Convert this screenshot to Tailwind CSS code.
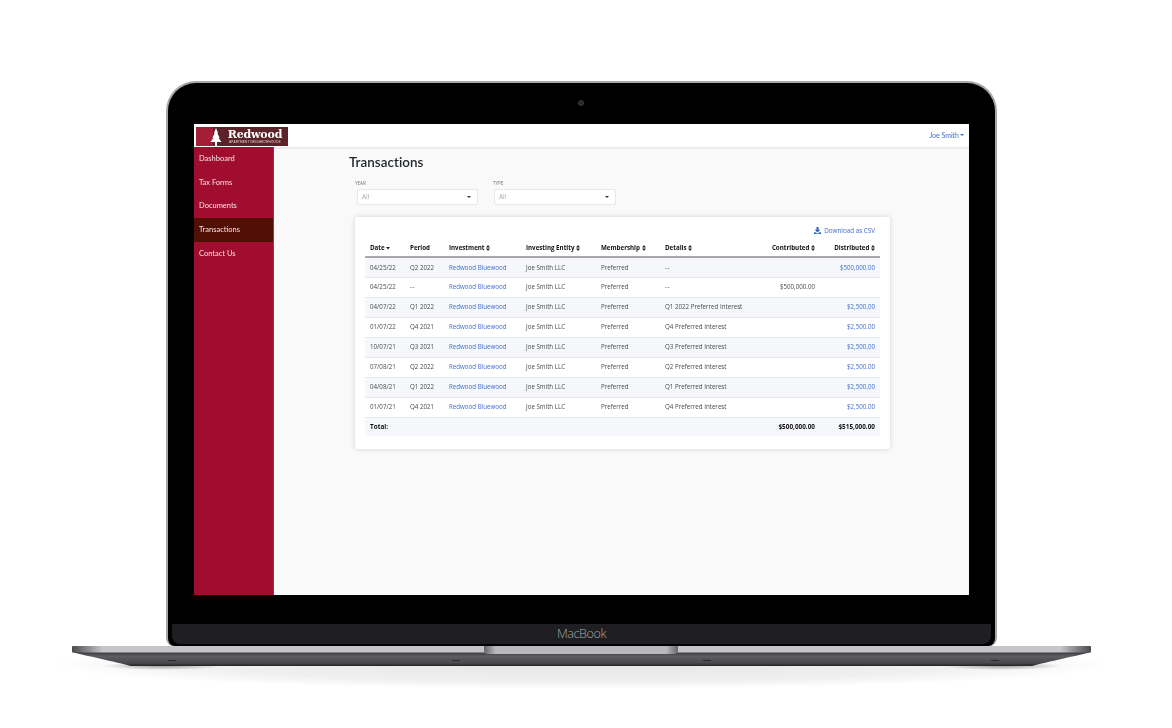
<!DOCTYPE html>
<html lang="en">
<head>
  <meta charset="UTF-8">
  <title>Transactions</title>
  <script src="https://cdn.jsdelivr.net/npm/@tailwindcss/browser@4"></script>
</head>
<body class="bg-white overflow-hidden font-['Open_Sans',sans-serif]">
  <div class="w-[1172px] h-[728px] pt-[81px] flex flex-col items-start">

    <!-- lid -->
    <div class="relative ml-[166px] w-[831px] h-[565px] rounded-t-[30px] rounded-b-[8px] bg-black border-x-2 border-t-2 border-[#a8a8aa] pt-[41px] pl-[26px]">
      <div class="absolute left-[410px] top-[17px] w-[6px] h-[6px] rounded-full bg-[#26262a] border border-[#3c3c40]"></div>

      <!-- screen -->
      <div class="w-[775px] h-[471px] bg-[#f9f9f9] flex flex-col overflow-hidden blur-[0.3px]">
        <header class="h-[25px] shrink-0 bg-white border-b-2 border-[#ececec] flex items-center justify-between pr-[5px]">
          <div class="ml-[2px] mt-[1px] w-[92px] h-[19px] flex bg-[#5b2327]">
            <div class="w-[17px] bg-[#a31f38] relative">
              <svg class="absolute left-[14px] top-[1px]" width="12" height="18" viewBox="0 0 12 18"><path d="M6 0 L8 5 L7.4 5 L9.6 10 L8.6 10 L11.5 14 L7 14 L7 18 L5 18 L5 14 L.5 14 L3.4 10 L2.4 10 L4.6 5 L4 5 Z" fill="#fff"/></svg>
            </div>
            <div class="flex-1 flex flex-col items-center pl-[12px] pr-[3px] text-white">
              <span class="font-['DejaVu_Serif',serif] font-bold text-[11px] leading-[13px] mt-[1px] tracking-[-0.2px]">Redwood</span>
              <span class="font-['Liberation_Sans',sans-serif] text-[3px] leading-[3px] tracking-[0.25px] whitespace-nowrap text-[#e5d5d5]">APARTMENT NEIGHBORHOODS</span>
            </div>
          </div>
          <a class="text-[7px] text-[#3f6fd1] flex items-center gap-[1px] font-['Lato',sans-serif] -mt-[1px]">Joe Smith <span class="w-0 h-0 border-x-[2.5px] border-x-transparent border-t-[2.5px] border-t-[#3f6fd1]"></span></a>
        </header>

        <div class="flex flex-1 min-h-0">
          <nav class="w-[80px] shrink-0 bg-[#a00d2e] border-r border-[#b5283f] font-['Lato',sans-serif] text-[7.5px] text-[#f7e3e6] -mt-[2.5px]">
            <a class="h-[23.8px] px-[5px] flex items-center">Dashboard</a>
            <a class="h-[23.8px] px-[5px] flex items-center">Tax Forms</a>
            <a class="h-[23.8px] px-[5px] flex items-center">Documents</a>
            <a class="h-[23.8px] px-[5px] flex items-center bg-[#520f04]">Transactions</a>
            <a class="h-[23.8px] px-[5px] flex items-center">Contact Us</a>
          </nav>

          <main class="flex-1 pl-[75px] pt-[4px] text-[#333]">
            <h1 class="text-[13.4px] leading-[18px] font-semibold text-[#24282c] font-['Lato',sans-serif] tracking-[0.05px]">Transactions</h1>

            <div class="flex ml-[6px] mt-[9px] gap-[14px]">
              <div class="w-[124px]">
                <label class="block text-[4.6px] leading-[6px] text-[#777]">YEAR</label>
                <div class="mt-[3px] ml-[2px] h-[16px] w-[121px] bg-white border border-[#e8e8e8] rounded-[2px] flex items-center justify-between pl-[4px] pr-[6px] text-[6.5px] text-[#aaa]">All <span class="w-0 h-0 border-x-[2px] border-x-transparent border-t-[2.5px] border-t-[#333]"></span></div>
              </div>
              <div class="w-[123px]">
                <label class="block text-[4.6px] leading-[6px] text-[#777]">TYPE</label>
                <div class="mt-[3px] ml-[1px] h-[16px] w-[122px] bg-white border border-[#e8e8e8] rounded-[2px] flex items-center justify-between pl-[4px] pr-[6px] text-[6.5px] text-[#aaa]">All <span class="w-0 h-0 border-x-[2px] border-x-transparent border-t-[2.5px] border-t-[#333]"></span></div>
              </div>
            </div>

            <section class="ml-[6px] mt-[12px] w-[535px] h-[232px] bg-white rounded-[2px] shadow-[0_0_5px_rgba(0,0,0,0.16)] pl-[10px] pt-[8px]">
              <a class="w-[510px] h-[11px] flex items-center justify-end gap-[3px] text-[6.3px] text-[#3f6fd1]">
                <svg width="7" height="7" viewBox="0 0 10 10" fill="#2f62c8"><path d="M3.5 0h3v4H9L5 8 1 4h2.5zM0 7.5h2L5 9.5l3-2h2V10H0z"/></svg>
                Download as CSV
              </a>
              <table class="mt-[4px] w-[515px] table-fixed border-collapse text-[6.2px] text-[#4a4a4a] [&_td]:px-[5px] [&_th]:px-[5px] [&_th]:font-bold [&_th]:text-[#111] [&_th]:whitespace-nowrap [&_td]:whitespace-nowrap [&_th_svg]:inline [&_th_svg]:align-[-0.5px]">
                <colgroup><col class="w-[40px]"><col class="w-[39px]"><col class="w-[77px]"><col class="w-[75px]"><col class="w-[64px]"><col class="w-[90px]"><col class="w-[70px]"><col class="w-[60px]"></colgroup>
                <thead>
                  <tr class="h-[17px] border-b-2 border-[#a8a8a8] text-left">
                    <th>Date <svg width="4" height="6" viewBox="0 0 4 6"><path d="M0 2h4L2 4.5z" fill="#222"/></svg></th>
                    <th>Period</th>
                    <th>Investment <svg width="4" height="6" viewBox="0 0 4 6"><path d="M0 2.5h4L2 0zM0 3.5h4L2 6z" fill="#222"/></svg></th>
                    <th>Investing Entity <svg width="4" height="6" viewBox="0 0 4 6"><path d="M0 2.5h4L2 0zM0 3.5h4L2 6z" fill="#222"/></svg></th>
                    <th>Membership <svg width="4" height="6" viewBox="0 0 4 6"><path d="M0 2.5h4L2 0zM0 3.5h4L2 6z" fill="#222"/></svg></th>
                    <th>Details <svg width="4" height="6" viewBox="0 0 4 6"><path d="M0 2.5h4L2 0zM0 3.5h4L2 6z" fill="#222"/></svg></th>
                    <th class="text-right">Contributed <svg width="4" height="6" viewBox="0 0 4 6"><path d="M0 2.5h4L2 0zM0 3.5h4L2 6z" fill="#222"/></svg></th>
                    <th class="text-right">Distributed <svg width="4" height="6" viewBox="0 0 4 6"><path d="M0 2.5h4L2 0zM0 3.5h4L2 6z" fill="#222"/></svg></th>
                  </tr>
                </thead>
                <tbody class="[&_tr]:h-[20px] [&_tr]:border-b [&_tr]:border-[#e6e8eb] [&_a]:text-[#3f6fd1]">
                  <tr class="bg-[#f5f7fa]"><td>04/25/22</td><td>Q2 2022</td><td><a>Redwood Bluewood</a></td><td>Joe Smith LLC</td><td>Preferred</td><td class="tracking-[0.6px]">--</td><td></td><td class="text-right"><a>$500,000.00</a></td></tr>
                  <tr><td>04/25/22</td><td class="tracking-[0.6px]">--</td><td><a>Redwood Bluewood</a></td><td>Joe Smith LLC</td><td>Preferred</td><td class="tracking-[0.6px]">--</td><td class="text-right">$500,000.00</td><td></td></tr>
                  <tr class="bg-[#f5f7fa]"><td>04/07/22</td><td>Q1 2022</td><td><a>Redwood Bluewood</a></td><td>Joe Smith LLC</td><td>Preferred</td><td>Q1 2022 Preferred Interest</td><td></td><td class="text-right"><a>$2,500.00</a></td></tr>
                  <tr><td>01/07/22</td><td>Q4 2021</td><td><a>Redwood Bluewood</a></td><td>Joe Smith LLC</td><td>Preferred</td><td>Q4 Preferred Interest</td><td></td><td class="text-right"><a>$2,500.00</a></td></tr>
                  <tr class="bg-[#f5f7fa]"><td>10/07/21</td><td>Q3 2021</td><td><a>Redwood Bluewood</a></td><td>Joe Smith LLC</td><td>Preferred</td><td>Q3 Preferred Interest</td><td></td><td class="text-right"><a>$2,500.00</a></td></tr>
                  <tr><td>07/08/21</td><td>Q2 2022</td><td><a>Redwood Bluewood</a></td><td>Joe Smith LLC</td><td>Preferred</td><td>Q2 Preferred Interest</td><td></td><td class="text-right"><a>$2,500.00</a></td></tr>
                  <tr class="bg-[#f5f7fa]"><td>04/08/21</td><td>Q1 2022</td><td><a>Redwood Bluewood</a></td><td>Joe Smith LLC</td><td>Preferred</td><td>Q1 Preferred Interest</td><td></td><td class="text-right"><a>$2,500.00</a></td></tr>
                  <tr><td>01/07/21</td><td>Q4 2021</td><td><a>Redwood Bluewood</a></td><td>Joe Smith LLC</td><td>Preferred</td><td>Q4 Preferred Interest</td><td></td><td class="text-right"><a>$2,500.00</a></td></tr>
                </tbody>
                <tfoot>
                  <tr class="h-[19px] bg-[#f5f7fa] font-bold text-[#111] text-[6.4px]"><td colspan="6">Total:</td><td class="text-right">$500,000.00</td><td class="text-right">$515,000.00</td></tr>
                </tfoot>
              </table>
            </section>
          </main>
        </div>
      </div>

      <!-- chin -->
      <div class="mt-[29px] -ml-[22px] w-[819px] h-[20px] bg-[#1f1f23] rounded-b-[8px] flex items-center justify-center text-[12.5px] font-light text-[#a5a5a9] tracking-[-0.4px]">MacBook</div>
    </div>

    <!-- base -->
    <svg class="ml-[-28px] -mt-[1px]" width="1172" height="64" viewBox="-100 0 1172 64">
      <defs>
        <linearGradient id="top" x1="0" x2="1" y1="0" y2="0">
          <stop offset="0" stop-color="#4a4a4e"/><stop offset=".03" stop-color="#c6c6ca"/><stop offset=".97" stop-color="#c6c6ca"/><stop offset="1" stop-color="#4a4a4e"/>
        </linearGradient>
        <linearGradient id="low" x1="0" x2="0" y1="0" y2="1">
          <stop offset="0" stop-color="#38383c"/><stop offset=".3" stop-color="#5e5e62"/><stop offset=".8" stop-color="#48484c"/><stop offset="1" stop-color="#222226"/>
        </linearGradient>
        <linearGradient id="notch" x1="0" x2="1" y1="0" y2="0">
          <stop offset="0" stop-color="#66666a"/><stop offset=".06" stop-color="#b8b8bc"/><stop offset=".94" stop-color="#b8b8bc"/><stop offset="1" stop-color="#66666a"/>
        </linearGradient>
        <radialGradient id="floor"><stop offset="0" stop-color="#000" stop-opacity=".1"/><stop offset=".7" stop-color="#000" stop-opacity=".06"/><stop offset="1" stop-color="#000" stop-opacity="0"/></radialGradient>
        <radialGradient id="shade"><stop offset="0" stop-color="#000" stop-opacity=".35"/><stop offset="1" stop-color="#000" stop-opacity="0"/></radialGradient>
      </defs>
      <ellipse cx="509" cy="20" rx="530" ry="24" fill="url(#floor)"/>
      <ellipse cx="90" cy="21" rx="60" ry="4" fill="url(#shade)"/>
      <ellipse cx="930" cy="21" rx="60" ry="4" fill="url(#shade)"/>
      <path d="M0 7H1019C1000 12 970 18 960 21H59C49 18 19 12 0 7Z" fill="url(#low)"/>
      <rect x="0" y="1" width="1019" height="6.5" rx="1" fill="url(#top)"/>
      <path d="M412 1H606V6C606 8 604 9 602 9H416C414 9 412 8 412 6Z" fill="url(#notch)"/>
      <rect x="96" y="15" width="8" height="1" fill="#2a2a2e"/><rect x="919" y="15" width="8" height="1" fill="#2a2a2e"/>
      <rect x="380" y="15" width="8" height="1" fill="#2a2a2e"/><rect x="631" y="15" width="8" height="1" fill="#2a2a2e"/>
    </svg>
  </div>
</body>
</html>
